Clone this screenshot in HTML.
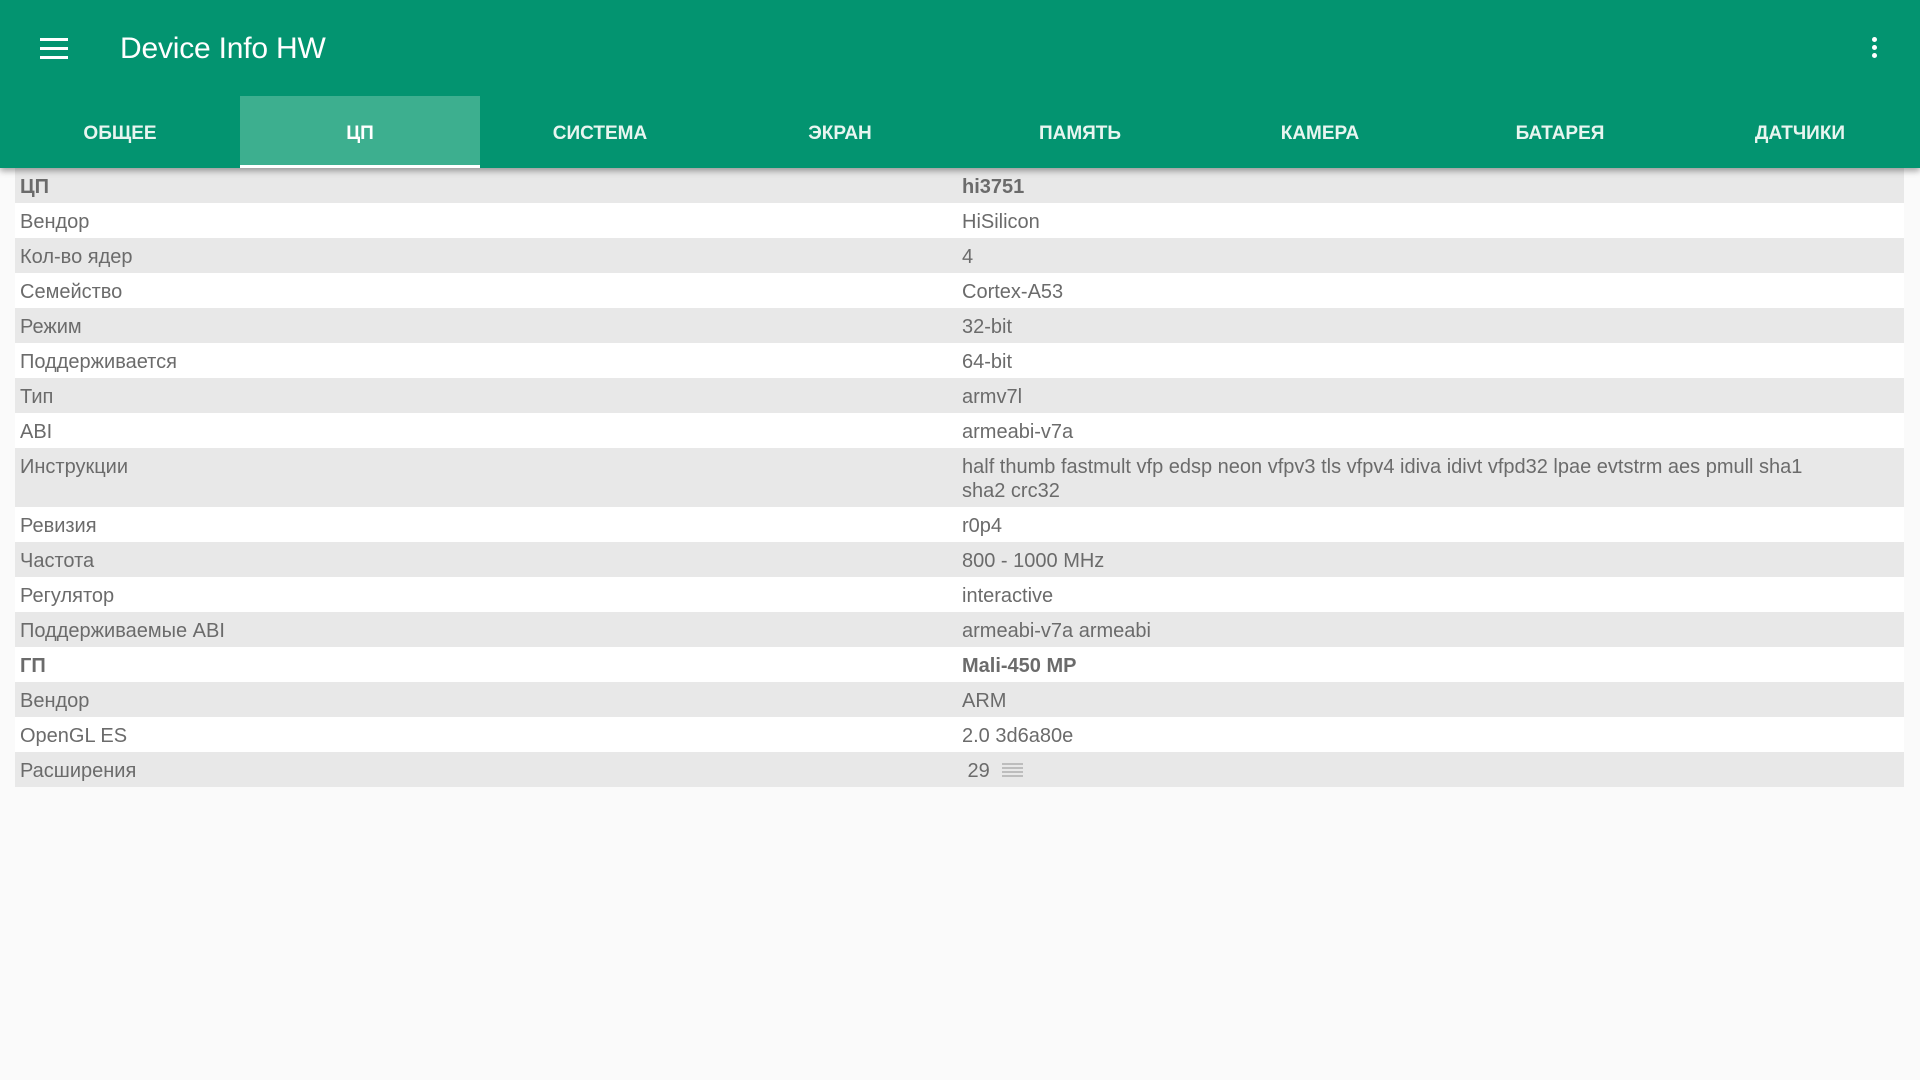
<!DOCTYPE html>
<html><head><meta charset="utf-8"><style>
*{margin:0;padding:0;box-sizing:border-box}
body{width:1920px;height:1080px;background:#fafafa;font-family:"Liberation Sans",sans-serif;overflow:hidden;position:relative}
.hdr{position:absolute;left:0;top:0;width:1920px;height:168px;background:#039470;box-shadow:0 3px 6px rgba(0,0,0,.35);z-index:2}
.title{position:absolute;left:120px;top:32px;font-size:30px;color:#fff;letter-spacing:-0.2px}
.ham{position:absolute;left:40px;top:38px;width:28px;height:22px}
.ham i{display:block;height:3px;background:#fff;margin-bottom:6px}
.dots{position:absolute;left:1872px;top:37px;width:6px}
.dots i{display:block;width:5px;height:5px;border-radius:50%;background:#fff;margin-bottom:3px}
.tabs{position:absolute;left:0;top:96px;height:72px;width:1920px;display:flex}
.tab{width:240px;height:72px;text-align:center;line-height:76px;color:#e8f5f0;font-size:19px;font-weight:bold;position:relative}
.tab.a{background:#3daf8f;color:#fff}
.tab.a:after{content:"";position:absolute;left:0;bottom:0;width:240px;height:3px;background:#fff}
.list{position:absolute;left:15px;top:168px;width:1889px}
.r{display:flex;min-height:35px;font-size:20px;color:#6b6b6b;line-height:24px;padding-top:7px}
.r:nth-child(odd){background:#e8e8e8}
.r:nth-child(even){background:#fff}
.k{width:947px;padding-left:5px}
.v{flex:1}
.b{font-weight:bold}
.dbl{height:59px}
.ic{display:inline-block;width:21px;height:16px;vertical-align:-2px;margin-left:12px}
.ic i{display:block;height:2px;background:#bdbdbd;margin-bottom:2px}
</style></head><body>
<div class="hdr">
<div class="ham"><i></i><i></i><i></i></div>
<div class="title">Device Info HW</div>
<div class="dots"><i></i><i></i><i></i></div>
<div class="tabs">
<div class="tab">ОБЩЕЕ</div><div class="tab a">ЦП</div><div class="tab">СИСТЕМА</div><div class="tab">ЭКРАН</div><div class="tab">ПАМЯТЬ</div><div class="tab">КАМЕРА</div><div class="tab">БАТАРЕЯ</div><div class="tab">ДАТЧИКИ</div>
</div></div>
<div class="list">
<div class="r b"><div class="k">ЦП</div><div class="v">hi3751</div></div>
<div class="r"><div class="k">Вендор</div><div class="v">HiSilicon</div></div>
<div class="r"><div class="k">Кол-во ядер</div><div class="v">4</div></div>
<div class="r"><div class="k">Семейство</div><div class="v">Cortex-A53</div></div>
<div class="r"><div class="k">Режим</div><div class="v">32-bit</div></div>
<div class="r"><div class="k">Поддерживается</div><div class="v">64-bit</div></div>
<div class="r"><div class="k">Тип</div><div class="v">armv7l</div></div>
<div class="r"><div class="k">ABI</div><div class="v">armeabi-v7a</div></div>
<div class="r dbl"><div class="k">Инструкции</div><div class="v">half thumb fastmult vfp edsp neon vfpv3 tls vfpv4 idiva idivt vfpd32 lpae evtstrm aes pmull sha1<br>sha2 crc32</div></div>
<div class="r"><div class="k">Ревизия</div><div class="v">r0p4</div></div>
<div class="r"><div class="k">Частота</div><div class="v">800 - 1000 MHz</div></div>
<div class="r"><div class="k">Регулятор</div><div class="v">interactive</div></div>
<div class="r"><div class="k">Поддерживаемые ABI</div><div class="v">armeabi-v7a armeabi</div></div>
<div class="r b"><div class="k">ГП</div><div class="v">Mali-450 MP</div></div>
<div class="r"><div class="k">Вендор</div><div class="v">ARM</div></div>
<div class="r"><div class="k">OpenGL ES</div><div class="v">2.0 3d6a80e</div></div>
<div class="r"><div class="k">Расширения</div><div class="v">&nbsp;29<span class="ic"><i></i><i></i><i></i><i></i></span></div></div>
</div>
</body></html>
